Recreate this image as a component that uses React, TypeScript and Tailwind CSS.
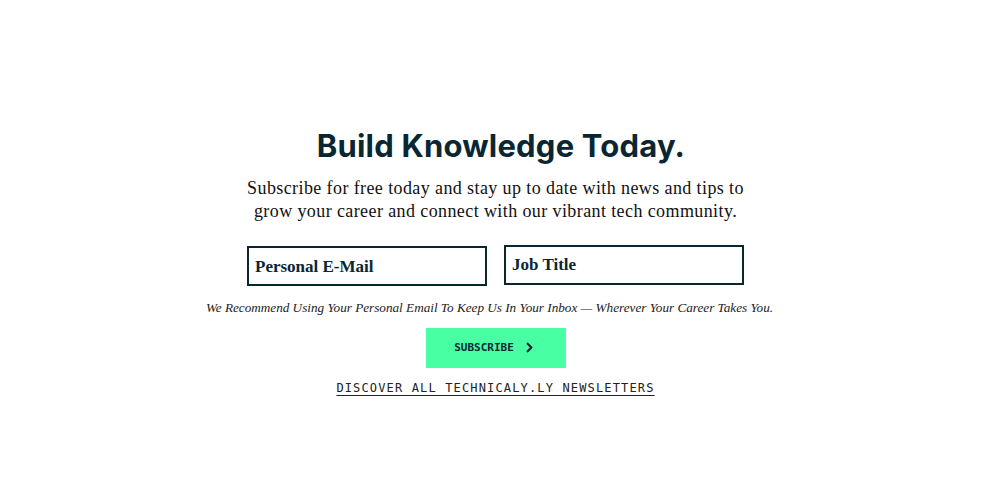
import { ChevronRight } from 'lucide-react';

export default function App() {
  return (
    <div className="w-[991px] h-[500px] bg-white flex flex-col items-center pt-[126px] text-[#0b2633]">
      <h1 className="pl-[11px] font-['Inter',sans-serif] text-[31px] leading-[40px] font-bold tracking-[0.2px]">
        Build Knowledge Today.
      </h1>
      <p className="mt-[11px] w-[510px] font-['Liberation_Serif',serif] text-[18px] leading-[23px] tracking-[0.4px] text-center text-[#111]">
        Subscribe for free today and stay up to date with news and tips to grow your career and connect with our vibrant tech community.
      </p>
      <div className="mt-[22px] flex gap-[17px] font-['Liberation_Serif',serif] text-[17px] font-bold">
        <div className="w-[240px] h-[40px] mt-[1px] border-2 border-[#0b2633] flex items-center px-[6px] pt-[2px]">
          Personal E-Mail
        </div>
        <div className="w-[240px] h-[40px] border-2 border-[#0b2633] flex items-center px-[6px]">
          Job Title
        </div>
      </div>
      <p className="mt-[12px] pr-[12px] font-['Liberation_Serif',serif] text-[13.2px] italic text-[#222]">
        We Recommend Using Your Personal Email To Keep Us In Your Inbox — Wherever Your Career Takes You.
      </p>
      <button className="mt-[10px] w-[140px] h-[40px] bg-[#49ffa4] flex items-center justify-center gap-[8px] font-['DejaVu_Sans_Mono',monospace] text-[11px] font-bold text-[#0b2633]">
        SUBSCRIBE
        <ChevronRight size={15} strokeWidth={3.5} />
      </button>
      <a className="mt-[11px] font-['DejaVu_Sans_Mono',monospace] text-[12px] tracking-[1.15px] text-[#222] underline underline-offset-[3px]">
        DISCOVER ALL TECHNICALY.LY NEWSLETTERS
      </a>
    </div>
  );
}
